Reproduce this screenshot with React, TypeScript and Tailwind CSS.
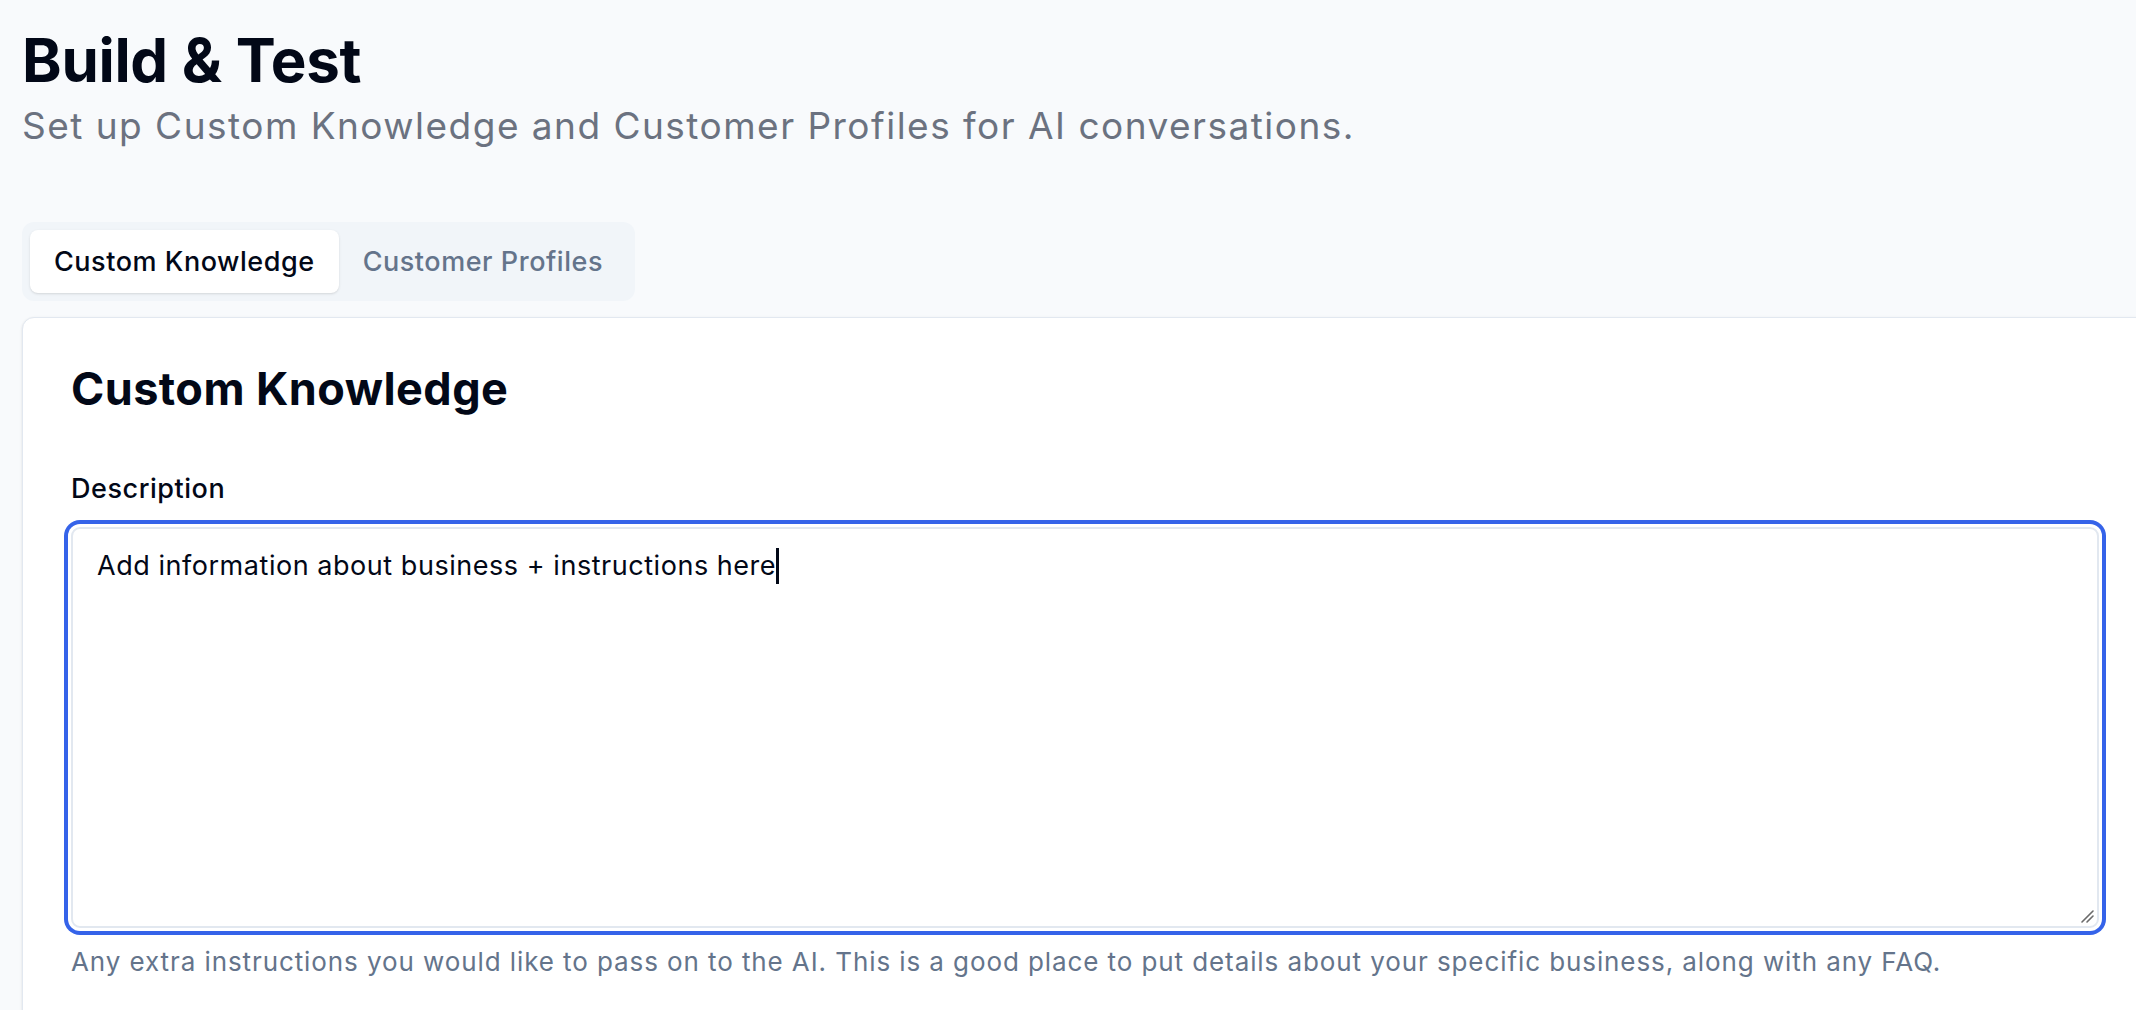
const App = () => {
  return (
    <div className="min-h-screen w-full overflow-hidden bg-[#f8fafc] font-['Inter',sans-serif] text-[#020817]">
      <div className="w-[2170px] px-[22px] pt-[30px]">
        <h1 className="text-[60px] font-bold leading-none tracking-[-0.005em]">Build &amp; Test</h1>
        <p className="mt-[9px] text-[37px] leading-[54px] tracking-[0.04em] text-[#6b7280]">
          Set up Custom Knowledge and Customer Profiles for AI conversations.
        </p>

        <div className="mt-[69px] inline-flex rounded-[12px] bg-[#f1f5f9] p-[8px]">
          <button className="h-[63px] rounded-[8px] bg-white px-[24px] text-[27px] font-medium leading-[40px] tracking-[0.02em] text-[#020817] shadow-sm">
            Custom Knowledge
          </button>
          <button className="h-[63px] rounded-[8px] px-[24px] text-[27px] font-medium leading-[40px] tracking-[0.02em] text-[#64748b]">
            Customer Profiles
          </button>
        </div>

        <div className="mt-[16px] w-[2126px] rounded-[12px] border border-[#e2e8f0] bg-white p-[48px] shadow-sm">
          <h2 className="text-[45px] font-bold leading-none tracking-[0.01em]">Custom Knowledge</h2>
          <label className="mt-[64px] block text-[27px] font-medium leading-none tracking-[0.02em]">Description</label>
          <div className="relative mt-[25px] h-[401px] rounded-[9px] border-2 border-[#e2e8f0] bg-white px-[24px] pb-[14px] pt-[17px] text-[27px] leading-[40px] tracking-[0.02em] ring-[4px] ring-[#3563e9] ring-offset-[3px] ring-offset-white">
            Add information about business + instructions here
            <span className="inline-block h-[36px] w-[3px] bg-[#020817] align-[-9px]" />
            <svg
              className="absolute bottom-[2px] right-[2px]"
              width="14"
              height="14"
              viewBox="0 0 14 14"
              fill="none"
              stroke="#6b6b6b"
              strokeWidth="1.6"
              strokeLinecap="round"
            >
              <line x1="1" y1="12" x2="12" y2="1" />
              <line x1="6" y1="12" x2="12" y2="6" />
            </svg>
          </div>
          <p className="mt-[16px] text-[26px] leading-[36px] tracking-[0.035em] text-[#64748b]">
            Any extra instructions you would like to pass on to the AI. This is a good place to put details about your specific business, along with any FAQ.
          </p>
        </div>
      </div>
    </div>
  );
};

export default App;
